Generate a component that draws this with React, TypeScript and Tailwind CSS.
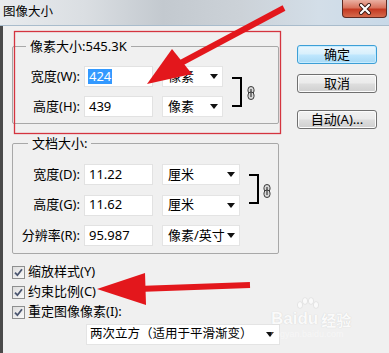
import React from 'react';

function Caret() {
  return (
    <svg width="8" height="5" viewBox="0 0 8 5" className="shrink-0">
      <polygon points="0,0 8,0 4,5" fill="#111" />
    </svg>
  );
}

function Select({ text, className }: { text: string; className: string }) {
  return (
    <div
      className={`h-[21px] bg-white border border-[#e4e4e4] flex items-center justify-between pl-[5px] pr-[4px] ${className}`}
    >
      <span className="whitespace-nowrap">{text}</span>
      <Caret />
    </div>
  );
}

function Field({ label, value, picked }: { label: string; value: string; picked?: boolean }) {
  return (
    <div className="flex items-center h-[21px]">
      <span className="w-[67px] text-right whitespace-nowrap">{label}</span>
      <div className="ml-[4px] w-[69px] h-[21px] bg-white border border-[#e2e2e2] flex items-center pl-[3px]">
        {picked ? (
          <span className="bg-[#3399ff] text-white leading-[15px] px-[1px]">{value}</span>
        ) : (
          <span className="px-[1px]">{value}</span>
        )}
      </div>
    </div>
  );
}

function Chain() {
  return (
    <svg width="8" height="14" viewBox="0 0 8 14" className="shrink-0">
      <rect x="1" y="0.5" width="6" height="7.5" rx="3" fill="#d8d8d8" stroke="#3a3a3a" />
      <rect x="1" y="6" width="6" height="7.5" rx="3" fill="#d8d8d8" stroke="#3a3a3a" />
      <line x1="4" y1="3" x2="4" y2="11" stroke="#3a3a3a" strokeWidth="1.2" />
    </svg>
  );
}

function Bracket({ ml }: { ml: string }) {
  return <div className={`${ml} w-[10px] h-[30px] border-t-2 border-r-2 border-b-2 border-black shrink-0`} />;
}

function Check({ label }: { label: string }) {
  return (
    <div className="flex items-center h-[20px]">
      <svg width="13" height="13" viewBox="0 0 13 13" className="shrink-0">
        <defs>
          <linearGradient id="cbg" x1="0" y1="0" x2="1" y2="1">
            <stop offset="0" stopColor="#dcdcdc" />
            <stop offset="1" stopColor="#fbfbfb" />
          </linearGradient>
        </defs>
        <rect x="0.5" y="0.5" width="12" height="12" fill="url(#cbg)" stroke="#8e8f8f" />
        <path d="M3 6.6 L5.4 9.2 L10 3.2" fill="none" stroke="#4b5670" strokeWidth="1.8" />
      </svg>
      <span className="ml-[3px] whitespace-nowrap">{label}</span>
    </div>
  );
}

function Button({ text, primary, className }: { text: string; primary?: boolean; className?: string }) {
  return (
    <div
      className={[
        'w-[80px] h-[19px] rounded-[3px] border flex items-center justify-center leading-none',
        primary
          ? 'border-[#3d9fd6] bg-[linear-gradient(180deg,#eaf6fd_0%,#d9f0fc_45%,#bee6fd_55%,#a7d9f5_100%)] shadow-[inset_0_0_0_1px_#c7ecff]'
          : 'border-[#707070] bg-[linear-gradient(180deg,#f2f2f2_0%,#ebebeb_45%,#dddddd_55%,#cfcfcf_100%)] shadow-[inset_0_0_0_1px_#fcfcfc]',
        className ?? '',
      ].join(' ')}
    >
      {text}
    </div>
  );
}

export default function App() {
  return (
    <div className="relative w-[389px] h-[353px] overflow-hidden bg-[#f0f0f0] text-[13px] text-black font-['Noto_Sans','Noto_Sans_CJK_SC',sans-serif]">
      {/* Title bar */}
      <div className="h-[26px] flex items-start justify-between border-b border-[#a9bccc] bg-[linear-gradient(90deg,#e8ebee_0%,#dadee2_22%,#c3c9cf_42%,#ccd2d8_62%,#d3dee8_82%,#c8d9e8_100%)]">
        <span className="ml-[3px] mt-[3px] text-[12.5px] leading-[18px]">图像大小</span>
        <div className="mr-[2px] w-[45px] h-[18px] rounded-b-[4px] border border-t-0 border-[#5e2a22] bg-[linear-gradient(180deg,#eab0a2_0%,#d9735d_45%,#c43a22_55%,#d56a4c_100%)] flex items-center justify-center">
          <svg width="14" height="12" viewBox="0 0 14 12">
            <path d="M3 2 L11 10 M11 2 L3 10" stroke="#3b1a14" strokeWidth="4" strokeLinecap="round" />
            <path d="M3 2 L11 10 M11 2 L3 10" stroke="#ffffff" strokeWidth="2.2" strokeLinecap="round" />
          </svg>
        </div>
      </div>

      {/* Body */}
      <div className="flex h-[327px] border-l-[3px] border-[#4a4a4a]">
        <div className="w-[276px] pl-[9px] pt-[11px] flex flex-col">
          <fieldset className="w-[267px] border border-[#a8a8a8] rounded-[2px] pb-[6px]">
            <legend className="ml-[13px] px-[4px] leading-[18px]">像素大小:545.3K</legend>
            <div className="mt-[11px] flex items-center">
              <div className="flex flex-col gap-[9px]">
                <div className="flex items-center">
                  <Field label="宽度(W):" value="424" picked />
                  <Select text="像素" className="ml-[9px] w-[61px]" />
                </div>
                <div className="flex items-center">
                  <Field label="高度(H):" value="439" />
                  <Select text="像素" className="ml-[9px] w-[61px]" />
                </div>
              </div>
              <Bracket ml="ml-[9px]" />
              <div className="ml-[5px] mt-[3px]">
                <Chain />
              </div>
            </div>
          </fieldset>

          <fieldset className="mt-[10px] w-[267px] border border-[#a8a8a8] rounded-[2px] pb-[7px]">
            <legend className="ml-[15px] px-[4px] leading-[18px]">文档大小:</legend>
            <div className="mt-[12px] flex items-start">
              <div className="flex flex-col gap-[9.5px]">
                <div className="flex items-center">
                  <Field label="宽度(D):" value="11.22" />
                  <Select text="厘米" className="ml-[9px] w-[78px]" />
                </div>
                <div className="flex items-center">
                  <Field label="高度(G):" value="11.62" />
                  <Select text="厘米" className="ml-[9px] w-[78px]" />
                </div>
                <div className="flex items-center">
                  <Field label="分辨率(R):" value="95.987" />
                  <Select text="像素/英寸" className="ml-[9px] w-[78px]" />
                </div>
              </div>
              <div className="flex items-center mt-[10px]">
                <Bracket ml="ml-[9px]" />
                <div className="ml-[4px] mt-[3px]">
                  <Chain />
                </div>
              </div>
            </div>
          </fieldset>

          <div className="mt-[8px] flex flex-col">
            <Check label="缩放样式(Y)" />
            <Check label="约束比例(C)" />
            <Check label="重定图像像素(I):" />
          </div>

          <Select
            text="两次立方（适用于平滑渐变）"
            className="mt-[2px] ml-[74px] w-[194px] text-[12.5px] !pl-[3px] pr-[5px]"
          />
        </div>

        <div className="ml-[18px] pt-[19px] flex flex-col">
          <Button text="确定" primary />
          <Button text="取消" className="mt-[10px]" />
          <Button text="自动(A)..." className="mt-[17px]" />
        </div>
      </div>

      {/* Baidu watermark */}
      <div className="absolute left-[271px] top-[310px] pointer-events-none opacity-70">
        <div className="flex items-end text-white font-['Liberation_Sans',sans-serif] font-bold text-[17px] leading-none [text-shadow:0_0_1px_#bdbdbd]">
          <span>Bai</span>
          <span className="relative">
            du
            <svg width="26" height="20" viewBox="0 0 26 20" className="absolute left-[-3px] top-[-13px]">
              <ellipse cx="6" cy="8" rx="2.6" ry="3.4" fill="#fff" stroke="#cfcfcf" strokeWidth="0.6" />
              <ellipse cx="11" cy="4" rx="2.6" ry="3.4" fill="#fff" stroke="#cfcfcf" strokeWidth="0.6" />
              <ellipse cx="17" cy="4" rx="2.6" ry="3.4" fill="#fff" stroke="#cfcfcf" strokeWidth="0.6" />
              <ellipse cx="22" cy="8" rx="2.6" ry="3.4" fill="#fff" stroke="#cfcfcf" strokeWidth="0.6" />
            </svg>
          </span>
          <span className="ml-[3px] text-[15px] font-['Noto_Sans_CJK_SC',sans-serif]">经验</span>
        </div>
        <div className="mt-[3px] text-[9px] leading-none text-white/70 font-['Liberation_Sans',sans-serif]">jingyan.baidu.com</div>
      </div>

      {/* Annotations */}
      <svg className="absolute left-0 top-0 pointer-events-none" width="389" height="353" viewBox="0 0 389 353">
        <rect x="14.5" y="31.5" width="266" height="102" fill="none" stroke="#d4343f" strokeWidth="1.3" />
        <line x1="284" y1="8" x2="179" y2="64" stroke="#e3171c" strokeWidth="6" />
        <polygon points="147,84 172,49 192,74" fill="#e3171c" />
        <line x1="250" y1="285" x2="138" y2="289" stroke="#e3171c" strokeWidth="6" />
        <polygon points="97,289 145,273 146,305" fill="#e3171c" />
      </svg>
    </div>
  );
}
